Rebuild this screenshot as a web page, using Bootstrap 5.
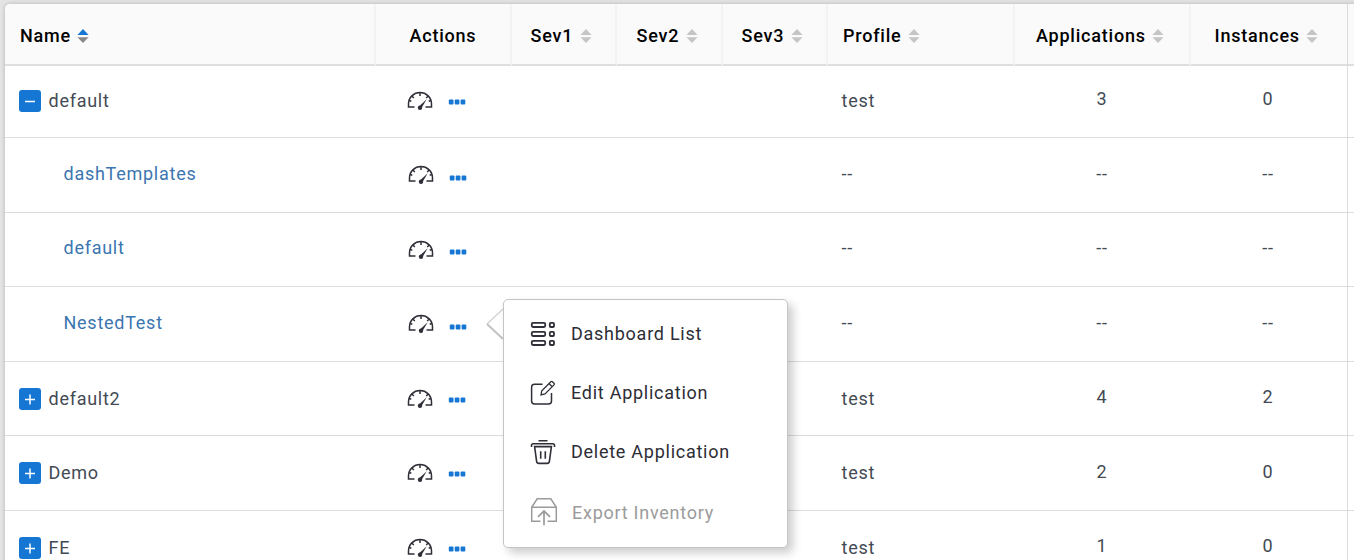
<!DOCTYPE html>
<html lang="en">
<head>
<meta charset="utf-8">
<title>Applications</title>
<link href="https://cdn.jsdelivr.net/npm/bootstrap@5.3.0/dist/css/bootstrap.min.css" rel="stylesheet">
<style>
body{background:#e4e4e5;font-family:Roboto,sans-serif;font-size:18px;line-height:24px;letter-spacing:.74px;height:560px;overflow:hidden}
.panel{margin:4px 0 0 5px;width:1360px;background:#fff;border-top-left-radius:5px;overflow:hidden;box-shadow:0 0 4px rgba(0,0,0,.22)}
.apps{table-layout:fixed;width:1360px;border-collapse:separate;border-spacing:0;margin:0;--bs-table-bg:transparent}
.apps>thead>tr>th{height:62px;padding:3px 0 0;vertical-align:middle;background:#fafafa;color:#000;font-weight:500;letter-spacing:.78px;border-bottom:2px solid #dedee0;border-right:2px solid #f3f3f4;line-height:24px}
.apps>tbody>tr>td{height:var(--h,75px);padding:0;vertical-align:top;border-bottom:1px solid #dcdcdc;color:#434a54}
.apps>tbody>tr>td:nth-child(8),.apps>thead>tr>th:nth-child(8){border-right:1px solid #dcdcdc}
.txt{padding-top:var(--t)}
.num{padding:var(--n) 2px 0 0}
.child a{color:#3b76b0;text-decoration:none;margin-left:58.5px}
.toggle-box{width:22px;height:22px;border-radius:3px;background:#1577d3;margin:1px 7.5px 0 14px}
.toggle-box svg,.acts svg,.menu svg,.sorter{display:block;flex:none}
.acts{padding-left:30.5px}
.acts .gauge{margin-top:var(--g)}
.acts .dots{margin:var(--d) 0 0 15px}
.child .acts{padding-left:31.5px}
.menu{left:503px;top:299px;width:285px;height:249px;background:#fff;border:1px solid #c4c4c4;border-radius:5px;box-shadow:5px 5px 10px rgba(0,0,0,.2);color:#2d2d35}
.menu .entry{position:absolute;left:26px;height:28px}
.menu .entry span{margin-left:13px}
.menu .off{color:#9b9b9b}
.menu .off span{margin-left:14px}
.arrow-tip{left:485px;top:306px}
</style>
</head>
<body>
<svg class="d-none">
<symbol id="gauge" viewBox="0 0 26 20"><path d="M7.5 16H1.5v-3.2a11.5 11.2 0 0 1 23 0V16h-6" fill="none" stroke="#2f2f38" stroke-width="1.5"/><path d="M13 1.5v3.6M4.8 5l2 2M21.2 5l-2 2M2.1 9.5l2.2.7M23.9 9.5l-2.2.7" stroke="#2f2f38" stroke-width="1.5"/><path d="M11.9 15.6l7.8-7.3-5.3 9z" fill="#2f2f38"/><circle cx="13" cy="16.7" r="2.2" fill="#2f2f38"/></symbol>
<symbol id="dots" viewBox="0 0 18 6"><g fill="#1577d3"><rect x=".8" y=".5" width="4.7" height="5" rx=".9"/><rect x="6.7" y=".5" width="4.7" height="5" rx=".9"/><rect x="12.6" y=".5" width="4.7" height="5" rx=".9"/></g></symbol>
<symbol id="sort" viewBox="0 0 12 14"><path d="M.4 6L6 0l5.6 6z" fill="var(--up,#c5c5c5)"/><path d="M.4 8.3h11.2L6 14z" fill="var(--dn,#c5c5c5)"/></symbol>
</svg>
<main class="panel">
<table class="table apps">
<colgroup><col style="width:371px"><col style="width:136px"><col style="width:105px"><col style="width:106px"><col style="width:105px"><col style="width:187px"><col style="width:176px"><col style="width:157px"><col></colgroup>
<thead><tr id="heads"></tr></thead>
<tbody id="rows"></tbody>
</table>
</main>
<svg class="arrow-tip position-absolute" width="19" height="36"><path d="M18 3L2 18l16 15z" fill="#fff"/><path d="M18 3L2 18" stroke="#d0d0d0" stroke-width="1.2"/><path d="M2 18l16 15" stroke="#c3c3c3" stroke-width="2"/></svg>
<nav class="menu position-absolute">
<div class="entry d-flex align-items-center" style="top:20px"><svg width="28" height="28" fill="none" stroke="#2f2f38" stroke-width="1.8"><rect x="1.8" y="2.8" width="13.4" height="4.2" rx="1.2"/><rect x="1.8" y="11.8" width="13.4" height="4.2" rx="1.2"/><rect x="1.8" y="20.8" width="13.4" height="4.2" rx="1.2"/><rect x="19.8" y="2.8" width="4.2" height="4.2" rx="1"/><rect x="19.8" y="11.8" width="4.2" height="4.2" rx="1"/><rect x="19.8" y="20.8" width="4.2" height="4.2" rx="1"/></svg><span>Dashboard List</span></div>
<div class="entry d-flex align-items-center" style="top:79px"><svg width="28" height="28" fill="none" stroke="#2f2f38" stroke-width="1.5"><path d="M12.5 5.3H4.6Q1.6 5.3 1.6 8.3V22Q1.6 25 4.6 25H18.5Q21.5 25 21.5 22V14"/><path stroke-width="1.3" d="M11 15.8l.8-4.1 9-9q.8-.7 1.6 0l1.6 1.6q.8.8 0 1.6l-9 9zM19 4.5l3.2 3.2"/></svg><span>Edit Application</span></div>
<div class="entry d-flex align-items-center" style="top:138px"><svg width="28" height="28" fill="none" stroke="#2f2f38" stroke-width="1.6"><path d="M8.5 2.8h9M1.5 9V7.5q0-1.7 1.7-1.7h19.6q1.7 0 1.7 1.7V9M4.6 8.6h16.8l-2 14.8q-.3 2-2.3 2H8.9q-2 0-2.3-2zM10.7 13.3v7.5M15.3 13.3v7.5"/></svg><span>Delete Application</span></div>
<div class="entry off d-flex align-items-center" style="top:199px"><svg style="margin-top:-2px" width="28" height="28" fill="none" stroke="#9b9b9b" stroke-width="1.5"><path d="M10.5 23.2H1.7V9.3L7.2.8h13.6l5.5 8.5v13.9h-8.8M1.7 9.3h24.6"/><path d="M14 27.2V13M8 18.8l6-5.8 6 5.8" stroke-width="1.7"/></svg><span>Export Inventory</span></div>
</nav>
<script src="https://cdn.jsdelivr.net/npm/bootstrap@5.3.0/dist/js/bootstrap.bundle.min.js"></script>
<script>
const heads=[['Name',15,1],['Actions',33.5,0],['Sev1',18.5,1],['Sev2',19.5,1],['Sev3',18.5,1],['Profile',15,1],['Applications',21,1],['Instances',23.5,1],['',0,0]];
document.getElementById('heads').innerHTML=heads.map(([t,p,s],i)=>`<th><div class="d-flex align-items-center" style="padding-left:${p}px${i?'':';--up:#1577d3;--dn:#888'}">${t}${s?'<svg class="sorter" style="margin-left:6.5px" width="12" height="14"><use href="#sort"/></svg>':''}</div></th>`).join('');
/* kind, name, profile, applications, instances, row height, offsets of text, number, gauge, dots */
const rows=[['-','default','test','3','0',72,23,21,25,33],
['','dashTemplates','--','--','--',75,24,24,27,37],
['','default','--','--','--',74,23,23,27,36],
['','NestedTest','--','--','--',75,24,24,27,37],
['+','default2','test','4','2',74,25,23,27,35],
['+','Demo','test','2','0',75,25,24,27,35],
['+','FE','test','1','0',75,25,23,27,35]];
document.getElementById('rows').innerHTML=rows.map(([k,n,p,a,i,h,t,m,g,d])=>`<tr class="${k?'':'child'}" style="--h:${h}px;--t:${t}px;--n:${m}px;--g:${g}px;--d:${d}px">
<td><div class="txt d-flex">${k?`<div class="toggle-box"><svg width="22" height="22"><path d="M6 11.5h10${k=='+'?'M11 6.5v10':''}" stroke="#fff" stroke-width="1.5"/></svg></div><span>${n}</span>`:`<a href="#">${n}</a>`}</div></td>
<td><div class="acts d-flex align-items-start"><svg class="gauge" width="26" height="20"><use href="#gauge"/></svg><svg class="dots" width="18" height="6"><use href="#dots"/></svg></div></td>
<td></td><td></td><td></td><td><div class="txt" style="padding-left:13.5px">${p}</div></td>
<td><div class="num text-center">${a}</div></td><td><div class="num text-center">${i}</div></td><td></td></tr>`).join('');
</script>
</body>
</html>
